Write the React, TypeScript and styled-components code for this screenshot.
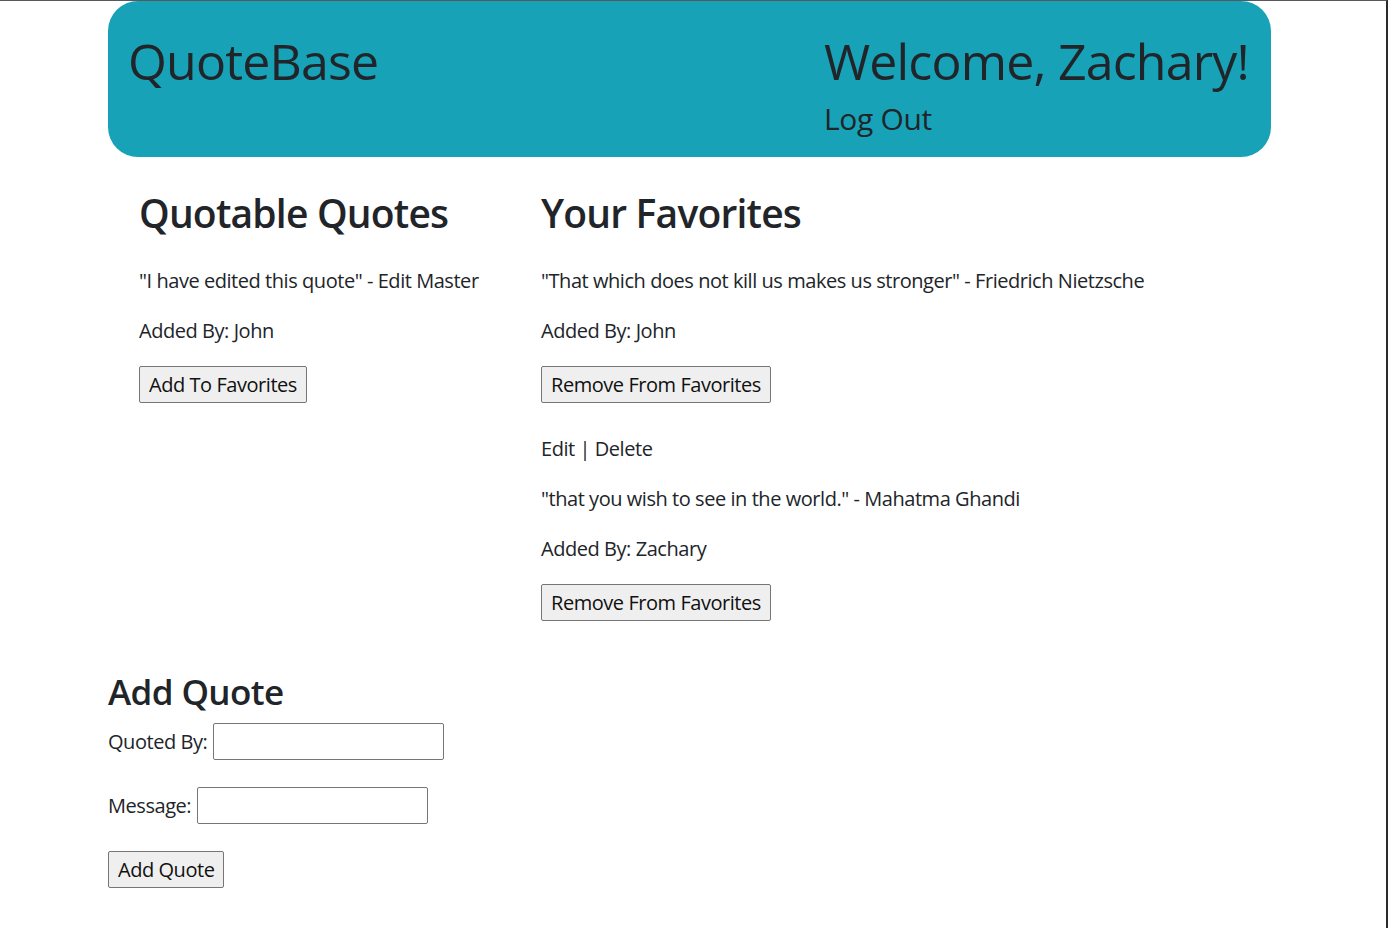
import styled, { createGlobalStyle } from "styled-components";

const GlobalStyle = createGlobalStyle`
  html {
    border-top: 1px solid #555a5e;
    border-right: 2px solid #2b2b2b;
    min-height: 100%;
    box-sizing: border-box;
  }
  body {
    margin: 0;
    font-family: "Open Sans", "Noto Sans", sans-serif;
    color: #212529;
    background: #fff;
  }
`;

const Container = styled.div`
  width: 1163px;
  margin-left: 108px;
  padding-bottom: 40px;
`;

const Header = styled.header`
  height: 156px;
  background-color: #17a2b8;
  border-radius: 30px;
  padding: 0 22px 0 20px;
  display: flex;
  justify-content: space-between;
  align-items: flex-start;
  box-sizing: border-box;
`;

const Brand = styled.h1`
  margin: 29px 0 0;
  font-size: 50px;
  font-weight: 500;
  letter-spacing: -0.8px;
  line-height: 62px;
`;

const UserBox = styled.div`
  display: flex;
  flex-direction: column;
  padding-top: 29px;
`;

const Welcome = styled.h1`
  margin: 0;
  font-size: 50px;
  font-weight: 500;
  letter-spacing: -0.8px;
  line-height: 62px;
`;

const LogOut = styled.a`
  margin-top: 9px;
  font-size: 30px;
  letter-spacing: -0.3px;
  line-height: 36px;
  color: #212529;
  cursor: pointer;
`;

const Columns = styled.div`
  display: flex;
  padding-left: 31px;
  margin-top: 32px;
`;

const Column = styled.section<{ $width?: number }>`
  width: ${(p) => (p.$width ? `${p.$width}px` : "auto")};
  flex: ${(p) => (p.$width ? "none" : "1")};
`;

const SectionTitle = styled.h2`
  margin: 0 0 29px;
  font-size: 39px;
  font-weight: 600;
  letter-spacing: -0.8px;
  line-height: 48px;
`;

const QuoteItem = styled.div`
  margin-bottom: 31px;
  &:last-child {
    margin-bottom: 0;
  }
`;

const Text = styled.p`
  margin: 0 0 20px;
  font-size: 20px;
  letter-spacing: -0.45px;
  line-height: 30px;
`;

const Button = styled.button`
  font-family: inherit;
  font-size: 20px;
  letter-spacing: -0.45px;
  line-height: 27px;
  color: #111;
  background: #efefef;
  border: 1px solid #767676;
  border-radius: 2px;
  padding: 4px 9px;
  cursor: pointer;
`;

const FormSection = styled.section`
  margin-top: 50px;
`;

const FormTitle = styled.h3`
  margin: 0 0 10px;
  font-size: 35px;
  font-weight: 600;
  letter-spacing: -0.6px;
  line-height: 42px;
`;

const FormRow = styled.div`
  display: flex;
  align-items: center;
  gap: 6px;
  height: 37px;
  margin-bottom: 27px;
`;

const Label = styled.label`
  font-size: 20px;
  letter-spacing: -0.45px;
  line-height: 30px;
`;

const Input = styled.input`
  width: 231px;
  height: 37px;
  box-sizing: border-box;
  border: 1px solid #767676;
  border-radius: 2px;
  font-family: inherit;
  font-size: 18px;
  padding: 0 4px;
`;

type Quote = {
  text: string;
  author: string;
  addedBy: string;
};

const CURRENT_USER = "Zachary";

const quotable: Quote[] = [
  { text: "I have edited this quote", author: "Edit Master", addedBy: "John" },
];

const favorites: Quote[] = [
  {
    text: "That which does not kill us makes us stronger",
    author: "Friedrich Nietzsche",
    addedBy: "John",
  },
  {
    text: "that you wish to see in the world.",
    author: "Mahatma Ghandi",
    addedBy: "Zachary",
  },
];

const QuoteCard = ({ quote, action }: { quote: Quote; action: string }) => (
  <QuoteItem>
    {quote.addedBy === CURRENT_USER && <Text>Edit | Delete</Text>}
    <Text>
      "{quote.text}" - {quote.author}
    </Text>
    <Text>Added By: {quote.addedBy}</Text>
    <Button>{action}</Button>
  </QuoteItem>
);

export default function App() {
  return (
    <>
      <GlobalStyle />
      <Container>
        <Header>
          <Brand>QuoteBase</Brand>
          <UserBox>
            <Welcome>Welcome, {CURRENT_USER}!</Welcome>
            <LogOut>Log Out</LogOut>
          </UserBox>
        </Header>
        <Columns>
          <Column $width={402}>
            <SectionTitle>Quotable Quotes</SectionTitle>
            {quotable.map((q) => (
              <QuoteCard key={q.text} quote={q} action="Add To Favorites" />
            ))}
          </Column>
          <Column>
            <SectionTitle>Your Favorites</SectionTitle>
            {favorites.map((q) => (
              <QuoteCard key={q.text} quote={q} action="Remove From Favorites" />
            ))}
          </Column>
        </Columns>
        <FormSection>
          <FormTitle>Add Quote</FormTitle>
          <FormRow>
            <Label htmlFor="quoted-by">Quoted By:</Label>
            <Input id="quoted-by" />
          </FormRow>
          <FormRow>
            <Label htmlFor="message">Message:</Label>
            <Input id="message" />
          </FormRow>
          <Button>Add Quote</Button>
        </FormSection>
      </Container>
    </>
  );
}
